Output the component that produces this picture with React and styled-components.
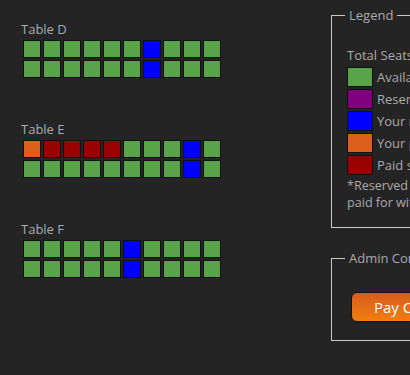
import React from "react";
import styled, { createGlobalStyle } from "styled-components";

const Global = createGlobalStyle`
  html, body { margin: 0; padding: 0; background: #242424; overflow: hidden; }
  body { font-family: "Open Sans", "Noto Sans", sans-serif; color: #aaaaaa; }
`;

const COLORS = {
  a: "#5aa34a",
  r: "#800080",
  m: "#0000ff",
  p: "#dd5f1e",
  s: "#990000",
};

const Page = styled.div`
  display: flex;
  align-items: flex-start;
  padding-left: 21px;
  width: 900px;
`;

const TablesColumn = styled.div`
  width: 310px;
  padding-top: 20px;
  display: flex;
  flex-direction: column;
  gap: 41px;
`;

const TableBlock = styled.div`
  display: flex;
  flex-direction: column;
  gap: 1px;
`;

const TableLabel = styled.div`
  font-size: 13px;
  line-height: 18px;
`;

const SeatGrid = styled.div`
  display: grid;
  grid-template-columns: repeat(10, 20px);
  padding-left: 1px;
`;

const Seat = styled.div`
  width: 18px;
  height: 18px;
  margin: 1px;
  box-sizing: border-box;
  border: 1px solid #111;
  background: ${(p) => COLORS[p.$s]};
`;

const SideColumn = styled.div`
  padding-top: 6px;
  display: flex;
  flex-direction: column;
  gap: 21px;
  width: 300px;
`;

const Box = styled.fieldset`
  margin: 0;
  border: 1px solid #c8c8c8;
  padding: 0 15px ${(p) => p.$pb}px 15px;
  min-width: 0;
`;

const BoxTitle = styled.legend`
  font-size: 13px;
  line-height: 18px;
  padding: 0 4px;
  margin-left: -2px;
  color: #aaaaaa;
`;

const Total = styled.div`
  font-size: 13px;
  line-height: 18px;
  margin-top: 22px;
  margin-bottom: 3px;
  white-space: nowrap;
`;

const KeyRow = styled.div`
  display: flex;
  align-items: center;
  gap: 4px;
  margin-bottom: 2px;
  font-size: 13px;
  line-height: 20px;
  white-space: nowrap;
`;

const Swatch = styled.span`
  width: 26px;
  height: 20px;
  box-sizing: border-box;
  border: 1px solid #111;
  background: ${(p) => COLORS[p.$s]};
  flex: none;
`;

const Note = styled.div`
  font-size: 12.6px;
  line-height: 17px;
  margin-top: 1px;
  white-space: nowrap;
`;

const PayButton = styled.button`
  display: block;
  margin: 25px 0 0 4px;
  height: 30px;
  padding: 0 22px;
  border: 1px solid #111;
  border-radius: 6px;
  background: linear-gradient(#d75c1d, #f27d10);
  color: #ffffff;
  font-family: "Open Sans", "Noto Sans", sans-serif;
  font-size: 15px;
  line-height: 28px;
  white-space: nowrap;
`;

const tables = [
  { name: "Table D", rows: ["aaaaaamaaa", "aaaaaamaaa"] },
  { name: "Table E", rows: ["pssssaaama", "aaaaaaaama"] },
  { name: "Table F", rows: ["aaaaamaaaa", "aaaaamaaaa"] },
];

const legend = [
  ["a", "Available"],
  ["r", "Reserved"],
  ["m", "Your reservation"],
  ["p", "Your pending payment"],
  ["s", "Paid seat"],
];

export default function App() {
  return (
    <>
      <Global />
      <Page>
        <TablesColumn>
          {tables.map((t) => (
            <TableBlock key={t.name}>
              <TableLabel>{t.name}</TableLabel>
              <SeatGrid>
                {t.rows.join("").split("").map((s, i) => (
                  <Seat key={i} $s={s} />
                ))}
              </SeatGrid>
            </TableBlock>
          ))}
        </TablesColumn>
        <SideColumn>
          <Box $pb={16}>
            <BoxTitle>Legend</BoxTitle>
            <Total>Total Seats: 120</Total>
            {legend.map(([k, label]) => (
              <KeyRow key={k}>
                <Swatch $s={k} />
                {label}
              </KeyRow>
            ))}
            <Note>
              *Reserved  seats are released if not
              <br />
              paid for within 24 hours.
            </Note>
          </Box>
          <Box $pb={18}>
            <BoxTitle>Admin Controls</BoxTitle>
            <PayButton>Pay Confirmed</PayButton>
          </Box>
        </SideColumn>
      </Page>
    </>
  );
}
